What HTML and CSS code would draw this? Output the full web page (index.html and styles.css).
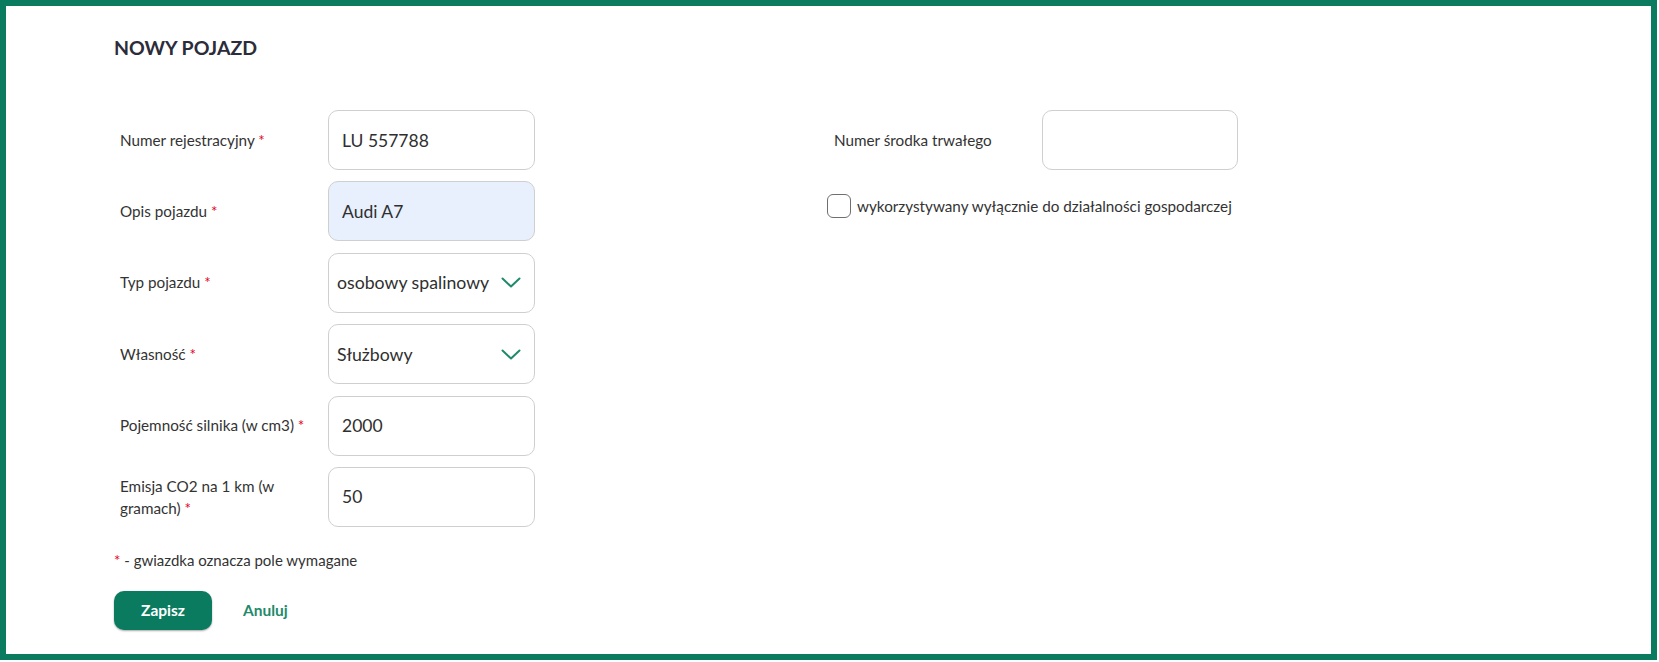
FILE: index.html
```html
<!DOCTYPE html>
<html lang="pl">
<head>
<meta charset="utf-8">
<title>Nowy pojazd</title>
<link rel="stylesheet" href="styles.css">
</head>
<body>
<div class="frame">
  <h1 class="title">NOWY POJAZD</h1>
  <div class="columns">
    <div class="col col-left">
      <div class="row">
        <label class="label">Numer rejestracyjny <span class="req">*</span></label>
        <div class="field"><span class="value">LU 557788</span></div>
      </div>
      <div class="row">
        <label class="label">Opis pojazdu <span class="req">*</span></label>
        <div class="field field-filled"><span class="value">Audi A7</span></div>
      </div>
      <div class="row">
        <label class="label">Typ pojazdu <span class="req">*</span></label>
        <div class="field field-select"><span class="value">osobowy spalinowy</span>
          <svg class="chev" width="20" height="11" viewBox="0 0 20 11"><path d="M1.5 1.5 L10 9.5 L18.5 1.5" fill="none" stroke="#1f8a6b" stroke-width="2" stroke-linecap="round" stroke-linejoin="round"/></svg>
        </div>
      </div>
      <div class="row">
        <label class="label">Własność <span class="req">*</span></label>
        <div class="field field-select"><span class="value">Służbowy</span>
          <svg class="chev" width="20" height="11" viewBox="0 0 20 11"><path d="M1.5 1.5 L10 9.5 L18.5 1.5" fill="none" stroke="#1f8a6b" stroke-width="2" stroke-linecap="round" stroke-linejoin="round"/></svg>
        </div>
      </div>
      <div class="row">
        <label class="label">Pojemność silnika (w cm3) <span class="req">*</span></label>
        <div class="field"><span class="value">2000</span></div>
      </div>
      <div class="row">
        <label class="label label-wrap"><span class="line">Emisja CO2 na 1 km (w</span><span class="line">gramach) <span class="req">*</span></span></label>
        <div class="field"><span class="value">50</span></div>
      </div>
    </div>
    <div class="col col-right">
      <div class="row">
        <label class="label">Numer środka trwałego</label>
        <div class="field field-narrow"></div>
      </div>
      <div class="check-row">
        <span class="checkbox"></span>
        <span class="check-text">wykorzystywany wyłącznie do działalności gospodarczej</span>
      </div>
    </div>
  </div>
  <p class="note"><span class="req">*</span> - gwiazdka oznacza pole wymagane</p>
  <div class="actions">
    <button class="btn-primary">Zapisz</button>
    <a class="btn-link">Anuluj</a>
  </div>
</div>
</body>
</html>
```
FILE: styles.css
```css
* { box-sizing: border-box; }
html, body { margin: 0; padding: 0; background: #fff; }
body { font-family: Lato, "Open Sans", Arial, sans-serif; color: #333; }

.frame {
  width: 1657px;
  height: 660px;
  border: 6px solid #0a7b5f;
  padding: 31px 0 0 108px;
}

.title {
  margin: 0;
  font-size: 19.5px;
  line-height: 22px;
  font-weight: 700;
  color: #2c2c3a;
}

.columns {
  display: flex;
  margin-top: 51px;
}

.col-left { width: 714px; display: flex; flex-direction: column; gap: 11.4px; }
.col-right { display: flex; flex-direction: column; }

.row { display: flex; align-items: center; height: 60px; }

.label {
  width: 214px;
  padding: 0 22px 0 6px;
  font-size: 15.25px;
  line-height: 21px;
  color: #333;
}
.label-wrap { line-height: 22px; }
.line { display: block; }
.req { color: #e3001b; }

.field {
  width: 207px;
  height: 60px;
  border: 1px solid #cfcfcf;
  border-radius: 10px;
  display: flex;
  align-items: center;
  padding: 0 13px;
  font-size: 17.5px;
  color: #2f2f2f;
  background: #fff;
}
.field-filled { background: #e8f0fe; }
.field-select { padding: 0 13px 0 8px; justify-content: space-between; font-size: 17.7px; }
.field-narrow { width: 196px; }
.chev { display: block; }

.check-row {
  display: flex;
  align-items: center;
  margin-top: 24px;
}
.checkbox {
  width: 24px;
  height: 24px;
  border: 1.5px solid #6f6f6f;
  border-radius: 6px;
  margin-right: 6px;
  margin-left: -1px;
}
.check-text { font-size: 15.25px; color: #333; }

.note {
  margin: 25px 0 0 0;
  font-size: 15px;
  line-height: 17px;
  color: #333;
}

.actions {
  display: flex;
  align-items: center;
  margin-top: 22px;
  gap: 31px;
}
.btn-primary {
  width: 98px;
  height: 39px;
  border: none;
  border-radius: 10px;
  background: #0a7b5f;
  color: #fff;
  font-family: Lato, Arial, sans-serif;
  font-size: 15.5px;
  font-weight: 700;
  box-shadow: 0 1px 2px rgba(0,0,0,0.35);
}
.btn-link {
  font-size: 15.5px;
  font-weight: 700;
  color: #1f8a6b;
}
```
